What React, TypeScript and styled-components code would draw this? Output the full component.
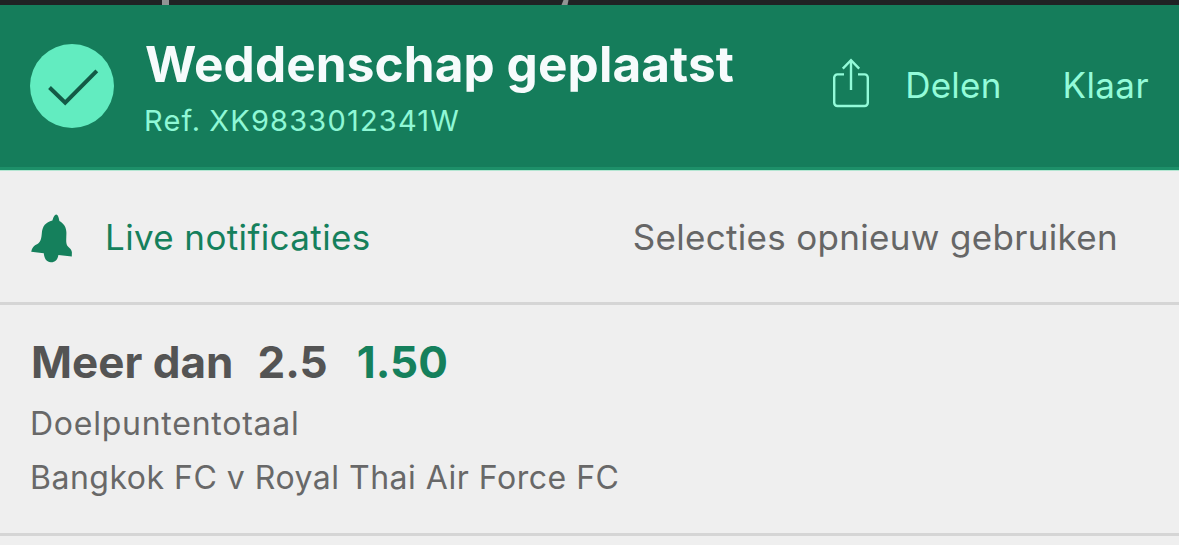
import styled, { createGlobalStyle } from "styled-components";

const selection = {
  name: "Meer dan",
  line: "2.5",
  odds: "1.50",
  market: "Doelpuntentotaal",
  fixture: "Bangkok FC v Royal Thai Air Force FC",
};

const CheckIcon = () => (
  <svg width="84" height="84" viewBox="0 0 84 84" fill="none">
    <circle cx="42" cy="42" r="42" fill="#62ecc0" />
    <path d="M19.5 43.5L35.2 58.7L66.8 26.8" stroke="#135a46" strokeWidth="4" />
  </svg>
);

const ShareIcon = () => (
  <svg width="36" height="50" viewBox="0 0 36 50" fill="none" stroke="#93fbd9" strokeWidth="2.4">
    <path d="M11 16.4H4.4A3.2 3.2 0 0 0 1.2 19.6V44.8A3.2 3.2 0 0 0 4.4 48H31.6A3.2 3.2 0 0 0 34.8 44.8V19.6A3.2 3.2 0 0 0 31.6 16.4H25" />
    <path d="M18 32V2" />
    <path d="M9.8 10.6L18 2.2L26.2 10.6" />
  </svg>
);

const BellIcon = () => (
  <svg width="42" height="49" viewBox="0 0 42 49" fill="#15805c">
    <path d="M25.2 0.6C27 0.7 27.8 3.8 28.4 7C33 9.5 35.3 13.5 35.4 18.5C35.5 23 34.6 28 36 31.2C37.2 33.2 40.6 34.6 40.9 38.2L40.8 42.6L27.4 40.9C26.6 45.8 23.8 48.4 19.8 48.2C15.6 48 13.2 44.6 12.8 39.2L0.2 37.8C1 33.8 2.8 31.4 6.4 30C9.6 28.6 10.4 24.4 10.8 19.6C11.2 12 14.8 8 21.4 6.4C22.4 3.2 23.6 0.6 25.2 0.6Z" />
  </svg>
);

const App = () => {
  return (
    <Page>
      <GlobalStyle />
      <Backdrop>
        <svg width="1179" height="5" fill="#929494">
          <path d="M162 0H169V5H162Z" />
          <path d="M563.5 0H568.5L567.5 5H561.5Z" />
        </svg>
      </Backdrop>
      <Header>
        <CheckIcon />
        <Heading>
          <Title>Weddenschap geplaatst</Title>
          <Reference>Ref. XK9833012341W</Reference>
        </Heading>
        <ShareButton>
          <ShareIcon />
          <Label $tracking={0.2}>Delen</Label>
        </ShareButton>
        <HeaderButton>
          <Label $tracking={0.4}>Klaar</Label>
        </HeaderButton>
      </Header>
      <Actions>
        <ActionButton $color="#15805c">
          <BellIcon />
          <Label $tracking={0.37}>Live notificaties</Label>
        </ActionButton>
        <ActionButton $color="#666666">
          <Label $tracking={0.32}>Selecties opnieuw gebruiken</Label>
        </ActionButton>
      </Actions>
      <Selection>
        <Pick>
          <span>{selection.name}</span>
          <Line>{selection.line}</Line>
          <Odds>{selection.odds}</Odds>
        </Pick>
        <Details>
          <Detail $tracking={0.75}>{selection.market}</Detail>
          <Detail $tracking={0.5}>{selection.fixture}</Detail>
        </Details>
      </Selection>
    </Page>
  );
};

export default App;

const GlobalStyle = createGlobalStyle`
  * {
    box-sizing: border-box;
  }

  body {
    margin: 0;
    overflow: hidden;
    background: #efefef;
  }
`;

const Page = styled.div`
  width: 1179px;
  height: 545px;
  overflow: hidden;
  background: #efefef;
  font-family: Inter, "Liberation Sans", sans-serif;
`;

const Backdrop = styled.div`
  height: 5px;
  background: #202224;

  svg {
    display: block;
  }
`;

const Header = styled.header`
  display: flex;
  align-items: flex-start;
  height: 166px;
  padding: 39px 30px 0 30px;
  background: #157d5b;
  border-bottom: 1px solid #b4e6d2;
  box-shadow: inset 0 -3px 0 #1d9069;
`;

const Heading = styled.div`
  flex: 1;
  margin: -10px 0 0 31px;
`;

const Title = styled.h1`
  margin: 0;
  color: #f6fbfc;
  font-size: 49.5px;
  font-weight: 700;
  line-height: 60px;
  letter-spacing: 0.1px;
  white-space: nowrap;
`;

const Reference = styled.div`
  margin: 9px 0 0 -1px;
  color: #8ff8d6;
  font-size: 29px;
  line-height: 36px;
  letter-spacing: 1.2px;
  word-spacing: -1.5px;
`;

const HeaderButton = styled.button`
  display: flex;
  align-items: center;
  height: 84px;
  padding: 0;
  border: none;
  background: none;
  color: #93fbd9;
  font-family: inherit;
  cursor: pointer;
`;

const ShareButton = styled(HeaderButton)`
  gap: 36px;
  margin-right: 61px;

  svg {
    margin-bottom: 6px;
  }
`;

const Label = styled.span<{ $tracking: number }>`
  margin-bottom: 2px;
  font-size: 35px;
  line-height: 44px;
  letter-spacing: ${({ $tracking }) => $tracking}px;
  white-space: nowrap;
`;

const Actions = styled.div`
  display: flex;
  justify-content: space-between;
  height: 134px;
  padding: 0 61px 0 31px;
  border-bottom: 3px solid #d5d5d5;
`;

const ActionButton = styled.button<{ $color: string }>`
  display: flex;
  align-items: center;
  gap: 32px;
  padding: 3px 0 0;
  border: none;
  background: none;
  color: ${({ $color }) => $color};
  font-family: inherit;
  cursor: pointer;
`;

const Selection = styled.section`
  height: 231px;
  padding: 31px 31px 0;
  border-bottom: 3px solid #d5d5d5;
`;

const Pick = styled.div`
  display: flex;
  color: #545454;
  font-size: 44px;
  font-weight: 700;
  line-height: 52px;
`;

const Line = styled.span`
  margin-left: 24px;
`;

const Odds = styled.span`
  margin-left: 29px;
  color: #15805c;
`;

const Details = styled.div`
  margin: 9px 0 0 -1px;
`;

const Detail = styled.div<{ $tracking: number }>`
  color: #686868;
  font-size: 32px;
  line-height: 54px;
  letter-spacing: ${({ $tracking }) => $tracking}px;
`;
